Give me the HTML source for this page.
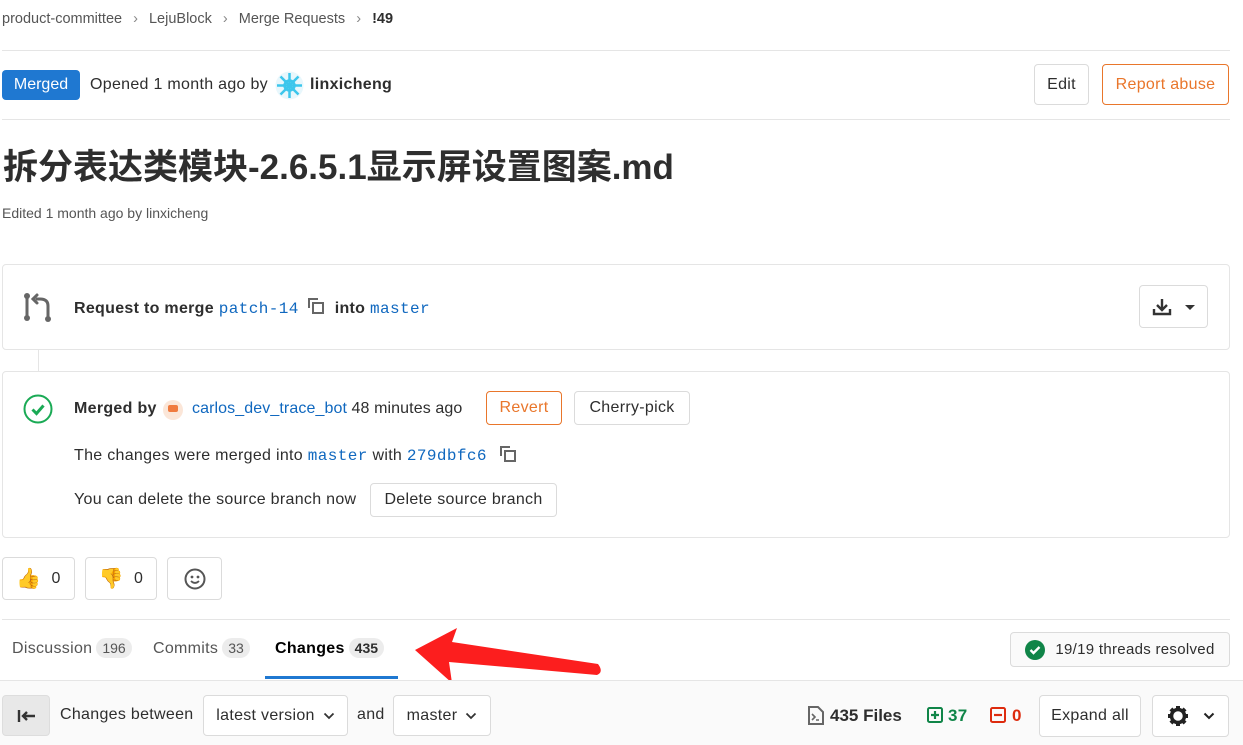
<!DOCTYPE html>
<html><head><meta charset="utf-8"><style>
*{box-sizing:border-box;margin:0;padding:0}
body{width:1243px;height:745px;overflow:hidden;background:#fff;font-family:"Liberation Sans","Noto Sans CJK SC",sans-serif;color:#2e2e2e;position:relative;font-size:16px;letter-spacing:0.3px}
.a{position:absolute;white-space:nowrap}
.hr{position:absolute;left:2px;width:1228px;height:1px;background:#e5e5e5}
.btn{position:absolute;border:1px solid #dbdbdb;border-radius:4px;background:#fff;display:flex;align-items:center;justify-content:center;font-size:16px;color:#2e2e2e}
.mono{font-family:"Liberation Mono",monospace;color:#1068bf;font-size:16px;letter-spacing:0.4px}
.link{color:#1068bf}
.badge{display:inline-block;background:#ececec;border-radius:10px;padding:2px 6px;font-size:14px;color:#555;margin-left:4px;letter-spacing:0}
</style></head><body>
<div class="a" style="left:2px;top:11px;font-size:14.5px;color:#555;letter-spacing:0">product-committee <span style="margin:0 7px;color:#888">›</span> LejuBlock <span style="margin:0 7px;color:#888">›</span> Merge Requests <span style="margin:0 7px;color:#888">›</span> <b style="color:#2e2e2e">!49</b></div>
<div class="hr" style="top:50px"></div>
<div class="a" style="left:2px;top:70px;width:78px;height:30px;background:#1f78d1;border-radius:4px;color:#fff;text-align:center;line-height:30px;font-size:16px;letter-spacing:0">Merged</div>
<div class="a" style="left:90px;top:76px">Opened 1 month ago by</div>
<svg class="a" style="left:275px;top:71px" width="29" height="29" viewBox="0 0 29 29"><circle cx="14.5" cy="14.5" r="14" fill="#e8f7fc"/><g stroke="#3cc6ec" stroke-width="2.5" fill="none"><circle cx="14.5" cy="14.5" r="5"/><path d="M14.5 2v25M2 14.5h25M5.5 5.5l18 18M23.5 5.5l-18 18"/></g></svg>
<div class="a" style="left:310px;top:76px;font-weight:bold">linxicheng</div>
<div class="btn" style="left:1034px;top:64px;width:55px;height:41px">Edit</div>
<div class="btn" style="left:1102px;top:64px;width:127px;height:41px;border-color:#e9762b;color:#e9762b">Report abuse</div>
<div class="hr" style="top:119px"></div>
<div class="a" style="left:3px;top:139px;font-size:35px;font-weight:bold;color:#2e2e2e;letter-spacing:0">拆分表达类模块-2.6.5.1显示屏设置图案.md</div>
<div class="a" style="left:2px;top:205px;font-size:14px;color:#555;letter-spacing:0">Edited 1 month ago by linxicheng</div>

<div class="a" style="left:2px;top:264px;width:1228px;height:86px;border:1px solid #e5e5e5;border-radius:4px"></div>
<svg class="a" style="left:22px;top:292px" width="32" height="30" viewBox="0 0 32 30"><g fill="none" stroke="#666" stroke-width="3" stroke-linecap="round"><path d="M5 4v22M26 27V14q0-7-8-7h-3"/><path d="M15 3l-4 4 4 4"/></g><circle cx="5" cy="4" r="3" fill="#666"/><circle cx="5" cy="26" r="3" fill="#666"/><circle cx="26" cy="27" r="3" fill="#666"/></svg>
<div class="a" style="left:74px;top:297px"><b>Request to merge</b> <span class="mono">patch-14</span><svg width="18" height="18" viewBox="0 0 18 18" style="vertical-align:-2px;margin:0 10px 0 8px"><path d="M2 11V2h9" fill="none" stroke="#666" stroke-width="2"/><rect x="6" y="6" width="10" height="10" fill="none" stroke="#666" stroke-width="2"/></svg><b>into</b> <span class="mono">master</span></div>
<div class="btn" style="left:1139px;top:285px;width:69px;height:43px"><svg width="20" height="18" viewBox="0 0 20 18"><path d="M10 1v10M5 7l5 5 5-5M2 11v5h16v-5" fill="none" stroke="#333" stroke-width="2.4"/></svg><svg width="12" height="8" style="margin-left:12px" viewBox="0 0 12 8"><path d="M1 2h10L6 7z" fill="#333"/></svg></div>
<div class="a" style="left:38px;top:350px;width:1px;height:21px;background:#e5e5e5"></div>

<div class="a" style="left:2px;top:371px;width:1228px;height:167px;border:1px solid #e5e5e5;border-radius:4px"></div>
<svg class="a" style="left:23px;top:394px" width="30" height="30" viewBox="0 0 30 30"><circle cx="15" cy="15" r="13.5" fill="none" stroke="#1aaa55" stroke-width="2"/><path d="M9.5 15.5l4 4 7-8" fill="none" stroke="#1aaa55" stroke-width="3"/></svg>
<div class="a" style="left:74px;top:400px"><b>Merged by</b></div>
<svg class="a" style="left:162px;top:399px" width="22" height="22"><circle cx="11" cy="11" r="10" fill="#fbe6d8"/><rect x="6" y="6" width="10" height="7" rx="2" fill="#f07b3f"/></svg>
<div class="a" style="left:192px;top:400px;letter-spacing:0.1px"><span class="link">carlos_dev_trace_bot</span> 48 minutes ago</div>
<div class="btn" style="left:486px;top:391px;width:76px;height:34px;border-color:#e9762b;color:#e9762b">Revert</div>
<div class="btn" style="left:574px;top:391px;width:116px;height:34px">Cherry-pick</div>
<div class="a" style="left:74px;top:445px">The changes were merged into <span class="mono">master</span> with <span class="mono">279dbfc6</span><svg width="18" height="18" viewBox="0 0 18 18" style="vertical-align:-3px;margin-left:12px"><path d="M2 11V2h9" fill="none" stroke="#666" stroke-width="2"/><rect x="6" y="6" width="10" height="10" fill="none" stroke="#666" stroke-width="2"/></svg></div>
<div class="a" style="left:74px;top:491px">You can delete the source branch now</div>
<div class="btn" style="left:370px;top:483px;width:187px;height:34px">Delete source branch</div>

<div class="btn" style="left:2px;top:557px;width:73px;height:43px;gap:10px"><span style="font-size:20px">👍</span>0</div>
<div class="btn" style="left:85px;top:557px;width:72px;height:43px;gap:10px"><span style="font-size:20px">👎</span>0</div>
<div class="btn" style="left:167px;top:557px;width:55px;height:43px"><svg width="22" height="22" viewBox="0 0 22 22"><circle cx="11" cy="11" r="9.5" fill="none" stroke="#555" stroke-width="2"/><circle cx="8" cy="9" r="1.4" fill="#555"/><circle cx="14" cy="9" r="1.4" fill="#555"/><path d="M7 13q4 4 8 0" fill="none" stroke="#555" stroke-width="1.8"/></svg></div>
<div class="hr" style="top:619px"></div>

<div class="a" style="left:12px;top:638px;color:#555">Discussion<span class="badge">196</span></div>
<div class="a" style="left:153px;top:638px;color:#555">Commits<span class="badge">33</span></div>
<div class="a" style="left:275px;top:638px;color:#000;font-weight:bold">Changes<span class="badge" style="color:#2e2e2e">435</span></div>
<div class="a" style="left:265px;top:676px;width:133px;height:3px;background:#1f78d1"></div>
<svg class="a" style="left:410px;top:624px" width="200" height="62" viewBox="410 624 200 62"><path d="M415 650L457 628L452 642L598 664Q604 672 597 675L449 662L452 683Z" fill="#fc1e1e"/></svg>
<div class="btn" style="left:1010px;top:632px;width:220px;height:35px;background:#fafafa;font-size:15px"><svg width="20" height="20" viewBox="0 0 20 20" style="margin-right:10px"><circle cx="10" cy="10" r="10" fill="#108548"/><path d="M5.5 10l3 3 6-6" fill="none" stroke="#fff" stroke-width="2.4"/></svg>19/19 threads resolved</div>

<div class="a" style="left:0;top:680px;width:1243px;height:65px;background:#fafafa;border-top:1px solid #e5e5e5"></div>
<div class="a" style="left:2px;top:695px;width:48px;height:41px;background:#e8e8e8;border:1px solid #ddd;border-radius:4px"><svg width="20" height="16" viewBox="0 0 20 16" style="position:absolute;left:14px;top:12px"><path d="M2 2v12M18 8H6M10 4L6 8l4 4" fill="none" stroke="#333" stroke-width="2.4"/></svg></div>
<div class="a" style="left:60px;top:706px">Changes between</div>
<div class="btn" style="left:203px;top:695px;width:145px;height:41px">latest version<svg width="12" height="8" viewBox="0 0 12 8" style="margin-left:8px"><path d="M1.5 1.5L6 6l4.5-4.5" fill="none" stroke="#333" stroke-width="1.8"/></svg></div>
<div class="a" style="left:357px;top:706px">and</div>
<div class="btn" style="left:393px;top:695px;width:98px;height:41px">master<svg width="12" height="8" viewBox="0 0 12 8" style="margin-left:8px"><path d="M1.5 1.5L6 6l4.5-4.5" fill="none" stroke="#333" stroke-width="1.8"/></svg></div>
<svg class="a" style="left:808px;top:706px" width="16" height="19" viewBox="0 0 16 19"><path d="M1 1h9l5 5v12H1z" fill="none" stroke="#666" stroke-width="2"/><path d="M4 8l3 3-3 3M8 14h3" fill="none" stroke="#666" stroke-width="1.6"/></svg>
<div class="a" style="left:830px;top:706px;font-weight:bold;font-size:17px;letter-spacing:0">435 Files</div>
<svg class="a" style="left:927px;top:707px" width="16" height="16" viewBox="0 0 16 16"><rect x="1" y="1" width="14" height="14" rx="1.5" fill="none" stroke="#108548" stroke-width="2"/><path d="M8 4v8M4 8h8" stroke="#108548" stroke-width="2.2"/></svg>
<div class="a" style="left:948px;top:706px;font-weight:bold;color:#108548;font-size:17px">37</div>
<svg class="a" style="left:990px;top:707px" width="16" height="16" viewBox="0 0 16 16"><rect x="1" y="1" width="14" height="14" rx="1.5" fill="none" stroke="#dd2b0e" stroke-width="2"/><path d="M4 8h8" stroke="#dd2b0e" stroke-width="2.2"/></svg>
<div class="a" style="left:1012px;top:706px;font-weight:bold;color:#dd2b0e;font-size:17px">0</div>
<div class="btn" style="left:1039px;top:695px;width:102px;height:42px">Expand all</div>
<div class="btn" style="left:1152px;top:695px;width:77px;height:42px"><svg width="22" height="22" viewBox="0 0 22 22"><circle cx="11" cy="11" r="6.5" fill="none" stroke="#222" stroke-width="3.5"/><g stroke="#222" stroke-width="4"><path d="M11 1v4M11 17v4M1 11h4M17 11h4M3.9 3.9l2.8 2.8M15.3 15.3l2.8 2.8M3.9 18.1l2.8-2.8M15.3 6.7l2.8-2.8"/></g></svg><svg width="12" height="8" viewBox="0 0 12 8" style="margin-left:14px"><path d="M1.5 1.5L6 6l4.5-4.5" fill="none" stroke="#222" stroke-width="2"/></svg></div>
</body></html>
